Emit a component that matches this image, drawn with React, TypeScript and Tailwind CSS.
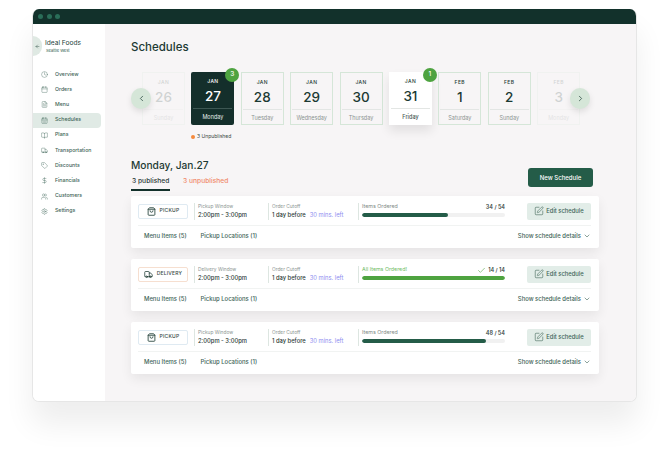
import {
  Calendar,
  CalendarDays,
  Check,
  ChevronDown,
  ChevronLeft,
  ChevronRight,
  Clock,
  DollarSign,
  ArrowLeft,
  FileText,
  BookOpen,
  ShoppingBag,
  SquarePen,
  Truck,
  Tag,
  Users,
  Settings,
} from "lucide-react";

const navItems = [
  { label: "Overview", icon: Clock },
  { label: "Orders", icon: Calendar },
  { label: "Menu", icon: FileText },
  { label: "Schedules", icon: CalendarDays, active: true },
  { label: "Plans", icon: BookOpen },
  { label: "Transportation", icon: Truck },
  { label: "Discounts", icon: Tag },
  { label: "Financials", icon: DollarSign },
  { label: "Customers", icon: Users },
  { label: "Settings", icon: Settings },
];

const days = [
  { month: "JAN", day: "26", name: "Sunday", faded: true },
  { month: "JAN", day: "27", name: "Monday", selected: true, badge: "3" },
  { month: "JAN", day: "28", name: "Tuesday" },
  { month: "JAN", day: "29", name: "Wednesday" },
  { month: "JAN", day: "30", name: "Thursday" },
  { month: "JAN", day: "31", name: "Friday", today: true, badge: "1" },
  { month: "FEB", day: "1", name: "Saturday" },
  { month: "FEB", day: "2", name: "Sunday" },
  { month: "FEB", day: "3", name: "Monday", faded: true },
];

const schedules = [
  { type: "PICKUP", windowLabel: "Pickup Window", count: "34 / 54", pct: 60 },
  { type: "DELIVERY", windowLabel: "Delivery Window", count: "14 / 14", pct: 100, done: true },
  { type: "PICKUP", windowLabel: "Pickup Window", count: "48 / 54", pct: 87 },
];

function DayCard({ d }: { d: (typeof days)[number] }) {
  let box = "border border-[#d5e6d8] text-[#1c3a33]";
  if (d.selected) box = "bg-[#142f2b] text-white rounded-[2px]";
  if (d.today) box = "bg-white text-[#1c3a33] shadow-[0_6px_10px_rgba(0,0,0,0.09)]";
  if (d.faded) box = "border border-[#d5e6d8] text-[#1c3a33] opacity-[0.18]";

  return (
    <div className={`relative w-[43px] h-[53px] shrink-0 flex flex-col items-center ${box}`}>
      <div className="mt-[6px] text-[5px] leading-[7px] font-medium tracking-[0.4px]">{d.month}</div>
      <div className="mt-[2px] text-[13.5px] leading-[18px] font-medium">{d.day}</div>
      <div className={`mt-[3px] w-[39px] h-px ${d.selected ? "bg-[#3d5753]" : "bg-[#e3e6e4]"}`} />
      <div
        className={`mt-[4px] text-[5.5px] leading-[8px] ${
          d.selected ? "text-[#e6ecea]" : d.today ? "text-[#4a5a56] font-medium" : "text-[#8b9491]"
        }`}
      >
        {d.name}
      </div>
      {d.badge && (
        <div className="absolute -top-[4px] -right-[5px] w-[14px] h-[14px] rounded-full bg-[#4ea340] text-white text-[6.5px] font-medium flex items-center justify-center">
          {d.badge}
        </div>
      )}
    </div>
  );
}

function ScheduleCard({ s }: { s: (typeof schedules)[number] }) {
  const delivery = s.type === "DELIVERY";
  return (
    <div className="bg-white rounded-[2px] h-[52px] px-[7px] pt-[7px] shadow-[0_5px_12px_rgba(0,0,0,0.07)]">
      <div className="flex items-center h-[17px] pb-px">
        <div
          className={`w-[50px] h-[15px] shrink-0 rounded-[2px] border flex items-center justify-center gap-[4px] ${
            delivery ? "border-[#f6dfd0]" : "border-[#dfeaf2]"
          }`}
        >
          {delivery ? (
            <Truck size={9} strokeWidth={2} className="text-[#1c3a33]" />
          ) : (
            <ShoppingBag size={9} strokeWidth={2.2} className="text-[#1c3a33]" />
          )}
          <span className="text-[5px] font-medium tracking-[0.2px] text-[#3a4a46]">{s.type}</span>
        </div>

        <div className="ml-[6px] w-[74px] h-[17px] shrink-0 border-l border-[#dde6e1] pl-[3px]">
          <div className="text-[4.8px] leading-[7px] text-[#8b9491]">{s.windowLabel}</div>
          <div className="text-[5.8px] leading-[9px] font-medium text-[#2b3a36]">2:00pm - 3:00pm</div>
        </div>

        <div className="w-[90px] h-[17px] shrink-0 border-l border-[#dde6e1] pl-[3px]">
          <div className="text-[4.8px] leading-[7px] text-[#8b9491]">Order Cutoff</div>
          <div className="text-[5.8px] leading-[9px] whitespace-nowrap">
            <span className="font-medium text-[#2b3a36]">1 day before</span>
            <span className="ml-[4px] text-[#8d8df0]">30 mins. left</span>
          </div>
        </div>

        <div className="w-[147px] h-[17px] shrink-0 border-l border-[#dde6e1] pl-[3px]">
          <div className="flex items-center justify-between h-[9px]">
            <span className={`text-[5.3px] ${s.done ? "text-[#6dbb5f]" : "text-[#7e8885]"}`}>
              {s.done ? "All Items Ordered!" : "Items Ordered"}
            </span>
            <span className="flex items-center gap-[2px] text-[5.5px] font-semibold text-[#3a4a46]">
              {s.done && <Check size={9} strokeWidth={1.5} className="text-[#4ea340]" />}
              {s.count}
            </span>
          </div>
          <div className="mt-[1px] h-[4px] rounded-full bg-[#f1f1f1] overflow-hidden">
            <div
              className={`h-full rounded-full ${s.done ? "bg-[#4ea340]" : "bg-[#245c48]"}`}
              style={{ width: `${s.pct}%` }}
            />
          </div>
        </div>

        <div className="ml-[22px] w-[64px] h-[17px] shrink-0 rounded-[2px] bg-[#e2ede8] flex items-center justify-center gap-[2px] text-[#3e6457]">
          <SquarePen size={10} strokeWidth={1.4} />
          <span className="text-[5.8px] font-medium">Edit schedule</span>
        </div>
      </div>

      <div className="mt-[5px] mr-[1px] border-t border-[#f1f3f2] flex items-center h-[22px] text-[#3e6457] text-[5.9px] font-medium">
        <span className="ml-[6px]">Menu Items (5)</span>
        <span className="ml-[14px]">Pickup Locations (1)</span>
        <span className="ml-auto flex items-center gap-[2px]">
          Show schedule details
          <ChevronDown size={8} strokeWidth={1.8} />
        </span>
      </div>
    </div>
  );
}

export default function App() {
  return (
    <div className="w-[670px] h-[459px] overflow-hidden bg-white pt-[9px] pl-[32px] font-['Inter',sans-serif]">
      <div className="w-[605px] h-[393px] rounded-[7px] border-b border-x border-[#e6e6e6] bg-white overflow-hidden shadow-[0_22px_30px_rgba(0,0,0,0.07)] flex flex-col">
        {/* title bar */}
        <div className="h-[15px] shrink-0 bg-[#12312b] flex items-center gap-[3.5px] pl-[5px]">
          <div className="w-[5px] h-[5px] rounded-full bg-[#2a6d58]" />
          <div className="w-[5px] h-[5px] rounded-full bg-[#2a6d58]" />
          <div className="w-[5px] h-[5px] rounded-full bg-[#2a6d58]" />
        </div>

        <div className="flex flex-1 min-h-0">
          {/* sidebar */}
          <aside className="w-[72px] shrink-0 bg-white">
            <div className="flex items-center h-[20px] mt-[12px]">
              <div className="w-[9px] h-[20px] rounded-r-full bg-[#dfe9e3] flex items-center justify-center shrink-0">
                <ArrowLeft size={5} strokeWidth={2} className="text-[#2a4a40]" />
              </div>
              <div className="ml-[3px]">
                <div className="text-[6.6px] leading-[9px] text-[#24403a]">Ideal Foods</div>
                <div className="ml-px text-[4px] leading-[6px] text-[#2a5a4a]">Seattle West</div>
              </div>
            </div>
            <nav className="mt-[11px] flex flex-col gap-[0.2px] pr-[4px]">
              {navItems.map((item) => {
                const Icon = item.icon;
                return (
                  <div
                    key={item.label}
                    className={`h-[15px] flex items-center pl-[8px] gap-[7px] rounded-r-[4px] text-[5.2px] font-medium text-[#3e6457] ${
                      item.active ? "bg-[#e0eae5]" : ""
                    }`}
                  >
                    <Icon size={7} strokeWidth={1.3} className="shrink-0" />
                    <span>{item.label}</span>
                  </div>
                );
              })}
            </nav>
          </aside>

          {/* main */}
          <main className="flex-1 min-w-0 bg-[#f7f5f6] pl-[26px] pr-[37px]">
            <h1 className="mt-[15px] text-[11.5px] leading-[16px] font-medium text-[#1c3a33]">Schedules</h1>

            <div className="relative mt-[17px] h-[53px] flex gap-[6.4px] pl-[11px]">
              {days.map((d) => (
                <DayCard key={d.day} d={d} />
              ))}
              <div className="absolute left-0 top-[16px] w-[20px] h-[21px] rounded-full bg-[#d5e6d8] flex items-center justify-center text-[#2a4a40] shadow-[0_3px_6px_rgba(0,0,0,0.1)]">
                <ChevronLeft size={9} strokeWidth={2} />
              </div>
              <div className="absolute left-[439px] top-[16px] w-[20px] h-[21px] rounded-full bg-[#d5e6d8] flex items-center justify-center text-[#2a4a40] shadow-[0_3px_6px_rgba(0,0,0,0.1)]">
                <ChevronRight size={9} strokeWidth={2} />
              </div>
            </div>

            <div className="mt-[8px] ml-[60px] flex items-center gap-[2px] h-[8px] text-[5px] text-[#3a4a46]">
              <div className="w-[4px] h-[4px] rounded-full bg-[#f58a3c]" />
              <span>3 Unpublished</span>
            </div>

            <div className="mt-[17px] flex items-start justify-between pr-[6px]">
              <div>
                <div className="text-[10.2px] leading-[14px] font-medium text-[#1c3a33]">Monday, Jan.27</div>
                <div className="mt-[3px] flex text-[6.7px] leading-[12px] h-[14px]">
                  <div className="w-[39px] text-[#2b3a36] font-medium border-b-2 h-[16px] border-[#12312b] pl-px whitespace-nowrap">
                    3 published
                  </div>
                  <div className="ml-[13px] text-[#f08a6c] font-medium">3 unpublished</div>
                </div>
              </div>
              <div className="mt-[10px] w-[65px] h-[19px] rounded-[3px] bg-[#245c48] text-white text-[6px] font-medium flex items-center justify-center">
                New Schedule
              </div>
            </div>

            <div className="mt-[7px] flex flex-col gap-[11px]">
              {schedules.map((s, i) => (
                <ScheduleCard key={i} s={s} />
              ))}
            </div>
          </main>
        </div>
      </div>
    </div>
  );
}
